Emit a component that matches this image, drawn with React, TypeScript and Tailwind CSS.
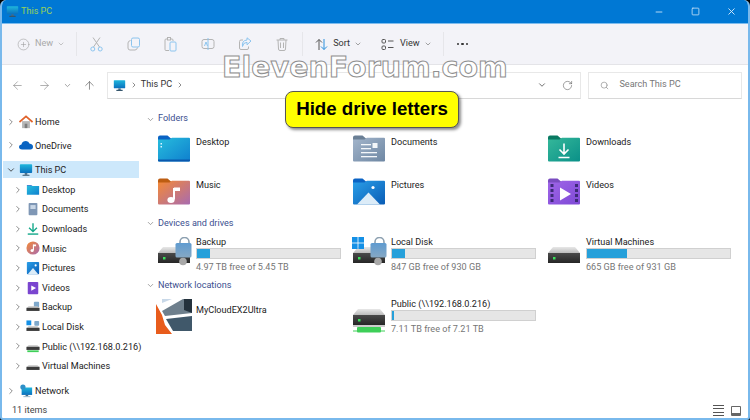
import { ArrowLeft, ArrowRight, ArrowUp, ChevronDown, ChevronRight, CirclePlus, Minus, RotateCw, Search, Square, X } from 'lucide-react';
import type { ReactNode } from 'react';

const ui = "font-['Roboto','Noto_Sans',sans-serif]";

function PcIcon({ size = 14 }: { size?: number }) {
  return (
    <svg width={size} height={size} viewBox="0 0 16 16">
      <rect x="1" y="1.500" width="14" height="10" rx="0.800" fill="url(#pc)" />
      <rect x="6.500" y="11.500" width="3" height="2" fill="#4a6d85" />
      <rect x="4" y="13.300" width="8" height="1.400" rx="0.500" fill="#35566d" />
    </svg>
  );
}

function FolderBase({ back, front, children }: { back: string; front: string; children?: ReactNode }) {
  return (
    <svg className="shrink-0" width="34" height="28" viewBox="0 0 34 28">
      <path d="M1 3.500Q1 1.500 3 1.500H10.500L14 4.500H32Q33 4.500 33 6V12H1Z" fill={back} />
      <path d="M1 5.500H12.500L15 3.800H32Q33 3.800 33 5V26.500Q33 27.500 32 27.500H2Q1 27.500 1 26.500Z" fill={front} />
      {children}
    </svg>
  );
}

function FolderIcon({ kind }: { kind: string }) {
  if (kind === 'Desktop')
    return (
      <FolderBase back="#0a63c4" front="url(#desk)">
        <rect x="3.500" y="9" width="1.500" height="1.500" fill="#d9f2ff" />
        <rect x="3.500" y="12" width="1.500" height="1.500" fill="#d9f2ff" />
        <path d="M1 25.500H33V26.500Q33 27.500 32 27.500H2Q1 27.500 1 26.500Z" fill="#0a58ad" />
      </FolderBase>
    );
  if (kind === 'Documents')
    return (
      <FolderBase back="#6a7f95" front="url(#docs)">
        <rect x="9" y="10" width="10" height="1.300" fill="#f4f7fa" />
        <rect x="9" y="14" width="10" height="1.300" fill="#f4f7fa" />
        <rect x="9" y="18" width="16" height="1.300" fill="#f4f7fa" />
        <rect x="9" y="22" width="16" height="1.300" fill="#f4f7fa" />
        <rect x="20.500" y="9" width="5" height="5" fill="#f4f7fa" />
      </FolderBase>
    );
  if (kind === 'Downloads')
    return (
      <FolderBase back="#0a7a62" front="url(#down)">
        <path d="M17 9.500V20M12.500 15.500L17 20L21.500 15.500M11.500 23.500H22.500" stroke="#fff" strokeWidth="1.600" fill="none" />
      </FolderBase>
    );
  if (kind === 'Music')
    return (
      <FolderBase back="#bd5d12" front="url(#mus)">
        <path d="M17 11V22.500" stroke="#fff" strokeWidth="2" />
        <path d="M17 10.500H23V14H17Z" fill="#fff" />
        <ellipse cx="14" cy="23" rx="3.600" ry="3" fill="#fff" />
      </FolderBase>
    );
  if (kind === 'Pictures')
    return (
      <FolderBase back="#0a63c4" front="url(#pics)">
        <circle cx="21" cy="10.500" r="1.600" fill="#fff" />
        <path d="M5 27.500L16.500 15.500L28 27.500Z" fill="#dcecf8" />
      </FolderBase>
    );
  return (
    <FolderBase back="#7a4cc0" front="url(#vid)">
      <path d="M13 10.500L24 17L13 23.500Z" fill="#fff" />
      {[8, 13, 18, 23].map((y) => (
        <g key={y}>
          <rect x="3.500" y={y - 1} width="3" height="3" fill="#3d2a78" />
          <rect x="28" y={y - 1} width="3" height="3" fill="#3d2a78" />
        </g>
      ))}
    </FolderBase>
  );
}

function DriveIcon({ lock, win, green }: { lock?: boolean; win?: boolean; green?: boolean }) {
  return (
    <svg width="38" height="36" viewBox="0 0 38 36">
      <path d="M6 10H28L33 16H1Z" fill="url(#driveTop)" />
      <rect x="1" y="16" width="32" height="10" fill="url(#driveBody)" />
      <rect x="6" y="20" width="2.500" height="2.500" fill="#39e05a" />
      {green && (
        <g>
          <rect x="1" y="26.500" width="32" height="1" fill="#9a9a9a" />
          <rect x="5" y="28" width="24" height="5.500" rx="1" fill="#3ecf58" />
          <rect x="1" y="31.500" width="32" height="1" fill="#3ecf58" />
        </g>
      )}
      {win && (
        <g fill="#1490e6">
          <rect x="0" y="0" width="5.600" height="5.600" />
          <rect x="6.400" y="0" width="5.600" height="5.600" />
          <rect x="0" y="6.400" width="5.600" height="5.600" />
          <rect x="6.400" y="6.400" width="5.600" height="5.600" />
        </g>
      )}
      {lock && (
        <g>
          <path d="M23 7V5A4.500 4.500 0 0 1 32 5V7" stroke="#8ca0b0" strokeWidth="1.600" fill="none" />
          <circle cx="26" cy="24.500" r="3.800" fill="#a8a8a8" />
          <rect x="18.500" y="6" width="16" height="14.500" rx="1.500" fill="url(#lock)" />
        </g>
      )}
    </svg>
  );
}

function CloudLogo() {
  return (
    <svg className="shrink-0" width="38" height="38" viewBox="0 0 38 38">
      <path d="M7 1H17L7 5Z" fill="#c8d8e8" />
      <path d="M1 6L7 17L10 27L17 36H1Z" fill="#e85c1c" />
      <path d="M7 13L28 1H37V15L10 18Z" fill="#6e7f8c" />
      <path d="M11 21L37 18V33H18Z" fill="#40586a" />
      <path d="M29 1H37V15L29 12Z" fill="#24323d" />
    </svg>
  );
}

function SmallIcon({ name }: { name: string }) {
  switch (name) {
    case 'Home':
      return (
        <svg width="14" height="14" viewBox="0 0 16 16">
          <rect x="3.500" y="7" width="9" height="8" fill="#b7b7b7" />
          <rect x="6.500" y="10" width="3" height="5" fill="#7d7d7d" />
          <path d="M0.500 8L8 1.500L15.500 8" stroke="#e0622a" strokeWidth="2" fill="none" />
        </svg>
      );
    case 'OneDrive':
      return (
        <svg width="14" height="14" viewBox="0 0 16 16">
          <path d="M3.500 13Q0 13 0 10Q0 7.500 2.800 7.300Q4 3.500 8 3.500Q11 3.500 12.200 6.500Q16 6.800 16 10Q16 13 13 13Z" fill="#0a64c2" />
        </svg>
      );
    case 'This PC':
      return <PcIcon />;
    case 'Desktop':
      return (
        <svg width="14" height="14" viewBox="0 0 16 16">
          <path d="M1 3.500H15V13.500H1Z" fill="url(#desk)" />
          <path d="M1 2.500H6L7.500 3.500H1Z" fill="#0a63c4" />
        </svg>
      );
    case 'Documents':
      return (
        <svg width="14" height="14" viewBox="0 0 16 16">
          <rect x="3" y="1" width="10" height="14" rx="1" fill="#7f97b5" />
          <rect x="5" y="3.500" width="6" height="4.500" fill="#c8d6e6" />
        </svg>
      );
    case 'Downloads':
      return (
        <svg width="14" height="14" viewBox="0 0 16 16">
          <path d="M8 1.500V10.500M3.500 6.500L8 11L12.500 6.500" stroke="#14a88a" strokeWidth="1.600" fill="none" />
          <rect x="2" y="13" width="12" height="1.600" fill="#14a88a" />
        </svg>
      );
    case 'Music':
      return (
        <svg width="14" height="14" viewBox="0 0 16 16">
          <circle cx="8" cy="8" r="7.500" fill="url(#mus)" />
          <path d="M8.500 4V10.500" stroke="#fff" strokeWidth="1.300" />
          <path d="M8.500 4H11.500V6H8.500Z" fill="#fff" />
          <circle cx="7" cy="10.800" r="1.800" fill="#fff" />
        </svg>
      );
    case 'Pictures':
      return (
        <svg width="14" height="14" viewBox="0 0 16 16">
          <rect x="1" y="1" width="14" height="14" rx="1" fill="url(#pics)" />
          <path d="M2 15L8 8L14 15Z" fill="#dcecf8" />
          <circle cx="11" cy="5" r="1.200" fill="#fff" />
        </svg>
      );
    case 'Videos':
      return (
        <svg width="14" height="14" viewBox="0 0 16 16">
          <rect x="2" y="1" width="12" height="14" rx="1" fill="#7a45cf" />
          <path d="M6 5L11.500 8L6 11Z" fill="#fff" />
        </svg>
      );
    case 'Backup':
    case 'Local Disk':
    case 'Virtual Machines':
    case 'Public (\\\\192.168.0.216)':
      return (
        <svg width="14" height="14" viewBox="0 0 16 16">
          {name === 'Backup' && <rect x="9" y="2" width="6" height="6" rx="1" fill="#7fa9cc" />}
          {name === 'Local Disk' && (
            <g>
              <rect x="0.500" y="0.500" width="5.500" height="5.500" fill="#1490e6" />
              <rect x="9.500" y="1" width="5.500" height="5.500" rx="1" fill="#7fa9cc" />
            </g>
          )}
          <path d="M3 7H13L15.500 9H0.500Z" fill="#c4c4c4" />
          <rect x="0.500" y="9" width="15" height="3.500" fill="#3c3c3c" />
          {name.startsWith('Public') && <rect x="1.500" y="13" width="13" height="2" fill="#3ecf58" />}
        </svg>
      );
    default:
      return (
        <svg width="16" height="16" viewBox="0 0 16 16">
          <rect x="3" y="4" width="12" height="8.500" fill="url(#pc)" />
          <circle cx="4.500" cy="3.500" r="3" fill="#2e90c8" />
          <rect x="7.500" y="12.500" width="3" height="1.500" fill="#4a6d85" />
          <rect x="5" y="14" width="8" height="1" fill="#8fb0c5" />
        </svg>
      );
  }
}

function SideRow({ name, indent, open, active }: { name: string; indent?: boolean; open?: boolean; active?: boolean }) {
  return (
    <div className={`flex items-center ${indent ? 'pl-[10px]' : 'pl-[3px]'} ${active ? 'my-[1.300px] h-[17px] bg-[#cde8fb]' : 'h-[19.6px]'}`}>
      {open ? <ChevronDown size={10} className="shrink-0 text-[#333]" /> : <ChevronRight size={10} className="shrink-0 text-[#777]" />}
      <span className="ml-[3px] flex w-[14px] shrink-0 justify-center">
        <SmallIcon name={name} />
      </span>
      <span className="ml-[2px] whitespace-nowrap pt-[2px] text-[9.100px] text-[#222]">{name}</span>
    </div>
  );
}

function GroupHead({ label, className }: { label: string; className: string }) {
  return (
    <div className={`flex items-center gap-[3px] pt-[1px] text-[9.100px] text-[#3b4f8f] ${className}`}>
      <ChevronDown size={9} className="text-[#888]" />
      {label}
    </div>
  );
}

function FolderTile({ name }: { name: string }) {
  return (
    <div className="flex h-[43.3px] w-[195px] gap-[5px]">
      <FolderIcon kind={name} />
      <span className="pt-[2px] text-[9.100px] leading-[13px] text-[#222]">{name}</span>
    </div>
  );
}

function DriveTile({ name, used, free, icon }: { name: string; used: number; free: string; icon: ReactNode }) {
  return (
    <div className="flex w-[193px]">
      <span className="mr-[1px] w-[38px] shrink-0 pt-[2.500px]">{icon}</span>
      <div className="w-[146px]">
        <div className="h-[13px] whitespace-nowrap pt-[1px] text-[9.100px] leading-[13px] text-[#222]">{name}</div>
        <div className="mt-[0.500px] h-[11px] w-[145px] border border-[#d0d0d0] bg-[#e6e6e6]">
          <div className="h-full bg-[#26a0da]" style={{ width: `${used}%` }} />
        </div>
        <div className="mt-[1.500px] whitespace-nowrap text-[9.100px] leading-[13px] text-[#767676]">{free}</div>
      </div>
    </div>
  );
}

function ToolBtn({ children }: { children: ReactNode }) {
  return <span className="flex w-[37px] justify-center">{children}</span>;
}

const gray = '#b4b4b4';
const blue = '#8cc4ee';

export default function App() {
  const folders = ['Desktop', 'Documents', 'Downloads', 'Music', 'Pictures', 'Videos'];
  const nav = ['Desktop', 'Documents', 'Downloads', 'Music', 'Pictures', 'Videos', 'Backup', 'Local Disk', 'Public (\\\\192.168.0.216)', 'Virtual Machines'];

  return (
    <div className={`relative h-[420px] w-[750px] overflow-hidden bg-black ${ui}`}>
      <svg className="absolute h-0 w-0">
        <defs>
          <linearGradient id="pc" x1="0" y1="0" x2="0" y2="1">
            <stop offset="0" stopColor="#1fb6dc" />
            <stop offset="1" stopColor="#0a6fbd" />
          </linearGradient>
          <linearGradient id="desk" x1="0" y1="0" x2="1" y2="1">
            <stop offset="0" stopColor="#27bddd" />
            <stop offset="1" stopColor="#0f7fce" />
          </linearGradient>
          <linearGradient id="docs" x1="0" y1="0" x2="1" y2="1">
            <stop offset="0" stopColor="#a3b5cb" />
            <stop offset="1" stopColor="#6e87a3" />
          </linearGradient>
          <linearGradient id="down" x1="0" y1="0" x2="1" y2="1">
            <stop offset="0" stopColor="#35b89a" />
            <stop offset="1" stopColor="#0a9088" />
          </linearGradient>
          <linearGradient id="mus" x1="0" y1="0" x2="1" y2="1">
            <stop offset="0" stopColor="#f58a35" />
            <stop offset="1" stopColor="#a86bb0" />
          </linearGradient>
          <linearGradient id="pics" x1="0" y1="0" x2="1" y2="1">
            <stop offset="0" stopColor="#2a9fe8" />
            <stop offset="1" stopColor="#0a5cb5" />
          </linearGradient>
          <linearGradient id="vid" x1="0" y1="0" x2="1" y2="1">
            <stop offset="0" stopColor="#a066e8" />
            <stop offset="1" stopColor="#7e49d6" />
          </linearGradient>
          <linearGradient id="driveTop" x1="0" y1="0" x2="0" y2="1">
            <stop offset="0" stopColor="#e8e8e8" />
            <stop offset="1" stopColor="#bcbcbc" />
          </linearGradient>
          <linearGradient id="driveBody" x1="0" y1="0" x2="0" y2="1">
            <stop offset="0" stopColor="#4a4a4a" />
            <stop offset="1" stopColor="#262626" />
          </linearGradient>
          <linearGradient id="lock" x1="0" y1="0" x2="0" y2="1">
            <stop offset="0" stopColor="#5f9bd0" />
            <stop offset="1" stopColor="#86a8c4" />
          </linearGradient>
        </defs>
      </svg>

      <div className="flex h-full flex-col overflow-hidden rounded-t-[6px] rounded-b-[3px] border-x-2 border-b-2 border-[#79b9ec] bg-white">
        {/* title bar */}
        <div className="-mx-[2px] flex h-[24px] shrink-0 items-center border-b border-[#7dbcee] bg-[#0078d4] pl-[6px] pr-[1px]">
          <PcIcon size={13} />
          <span className="ml-[2px] text-[9.100px] text-[#9ad25a]">This PC</span>
          <div className="ml-auto flex items-center text-[#d6eafa]">
            <span className="flex w-[36px] justify-center"><Minus size={10} /></span>
            <span className="flex w-[36px] justify-center"><Square size={9} /></span>
            <span className="flex w-[36px] justify-center"><X size={11} /></span>
          </div>
        </div>

        {/* command bar */}
        <div className="flex h-[41px] shrink-0 items-center border-b border-[#e4e4e8] bg-[#f3f3f8] pl-[15px] text-[9.100px]">
          <CirclePlus size={13} strokeWidth={1} className="text-[#999]" />
          <span className="ml-[5px] text-[#aaa]">New</span>
          <ChevronDown size={8} className="ml-[4px] text-[#aaa]" />
          <span className="ml-[11px] mr-[1px] h-[24px] w-px bg-[#e6e6ea]" />
          <ToolBtn>
            <svg width="13" height="15" viewBox="0 0 13 15" fill="none">
              <path d="M3 0.500L9.500 10M10 0.500L3.500 10" stroke={gray} />
              <circle cx="2.800" cy="12" r="2" stroke={blue} />
              <circle cx="10.200" cy="12" r="2" stroke={blue} />
            </svg>
          </ToolBtn>
          <ToolBtn>
            <svg width="14" height="14" viewBox="0 0 14 14" fill="none">
              <path d="M3.500 3.500Q1 4 1 6V11Q1 13 3 13H8Q10 13 10.500 10.500" stroke={gray} />
              <rect x="4.500" y="1" width="8" height="9" rx="1.500" stroke={blue} />
            </svg>
          </ToolBtn>
          <ToolBtn>
            <svg width="13" height="15" viewBox="0 0 13 15" fill="none">
              <path d="M5 13.500H2Q1 13.500 1 12.500V3Q1 2 2 2H8Q9 2 9 3V4" stroke={gray} />
              <rect x="3.500" y="0.500" width="3" height="2.500" fill="#f3f3f8" stroke={gray} />
              <rect x="6" y="5" width="6" height="9" rx="1" stroke={blue} />
            </svg>
          </ToolBtn>
          <ToolBtn>
            <svg width="14" height="14" viewBox="0 0 14 14" fill="none">
              <rect x="1" y="2.500" width="12" height="9" rx="2" stroke={gray} />
              <path d="M7 1V13M3.500 9L5 5L6.500 9" stroke={blue} />
            </svg>
          </ToolBtn>
          <ToolBtn>
            <svg width="14" height="14" viewBox="0 0 14 14" fill="none">
              <path d="M5 3H3Q1.500 3 1.500 4.500V11Q1.500 12.500 3 12.500H9Q10.500 12.500 10.500 11V9.500" stroke={gray} />
              <path d="M4.500 9.500Q5 5.500 9 5.300V7.800L13 4L9 0.800V3Q3.500 3.500 4.500 9.500Z" stroke={blue} />
            </svg>
          </ToolBtn>
          <ToolBtn>
            <svg width="12" height="14" viewBox="0 0 12 14" fill="none" stroke={gray}>
              <path d="M0.500 3H11.500M4 3V1.500H8V3M2 3L2.500 12Q2.500 13.500 4 13.500H8Q9.500 13.500 9.500 12L10 3M4.500 5.500V11M7.500 5.500V11" />
            </svg>
          </ToolBtn>
          <span className="mx-[2px] h-[24px] w-px bg-[#e6e6ea]" />
          <svg className="ml-[10px]" width="13" height="13" viewBox="0 0 13 13" fill="none">
            <path d="M4 12V1.500M1 4.500L4 1.500L7 4.500" stroke="#555" />
            <path d="M9 1V11.500M6 8.500L9 11.500L12 8.500" stroke="#2b8fdc" />
          </svg>
          <span className="ml-[5px] text-[#333]">Sort</span>
          <ChevronDown size={8} className="ml-[4px] text-[#777]" />
          <svg className="ml-[19px]" width="13" height="13" viewBox="0 0 13 13" fill="none" stroke="#555">
            <rect x="1" y="1.500" width="3.500" height="3.500" rx="1" />
            <rect x="1" y="8" width="3.500" height="3.500" rx="1" />
            <path d="M7 3H12.500M7 9.500H12.500" />
          </svg>
          <span className="ml-[6px] text-[#333]">View</span>
          <ChevronDown size={8} className="ml-[4px] text-[#777]" />
          <span className="ml-[11px] h-[24px] w-px bg-[#e6e6ea]" />
          <span className="ml-[13px] flex gap-[2px]">
            <i className="size-[2.500px] rounded-full bg-[#333]" />
            <i className="size-[2.500px] rounded-full bg-[#333]" />
            <i className="size-[2.500px] rounded-full bg-[#333]" />
          </span>
        </div>

        {/* address row */}
        <div className="flex h-[40px] shrink-0 items-center pl-[9px] pr-[6px] text-[#888]">
          <ArrowLeft size={13} strokeWidth={1.200} />
          <ArrowRight size={13} strokeWidth={1.200} className="ml-[14px]" />
          <ChevronDown size={9} className="ml-[12px]" />
          <ArrowUp size={13} strokeWidth={1.200} className="ml-[11px] text-[#555]" />
          <div className="ml-[11px] flex h-[27px] w-[476px] items-center border border-[#e8e8e8] border-b-[#d8d8d8] pl-[5px] pr-[7px]">
            <PcIcon size={13} />
            <ChevronRight size={8} className="ml-[4px] text-[#555]" />
            <span className="ml-[3px] text-[9.100px] text-[#333]">This PC</span>
            <ChevronRight size={8} className="ml-[4px] text-[#555]" />
            <ChevronDown size={10} className="ml-auto text-[#555]" />
            <RotateCw size={11} strokeWidth={1.200} className="ml-[15px] text-[#555]" />
          </div>
          <div className="ml-[7px] flex h-[27px] w-[154px] items-center border border-[#e8e8e8] border-b-[#d8d8d8] pl-[11px]">
            <Search size={9} className="text-[#999]" />
            <span className="ml-[10px] text-[9.100px] text-[#777]">Search This PC</span>
          </div>
        </div>

        <div className="flex min-h-0 flex-1">
          {/* nav pane */}
          <div className="ml-[1px] w-[136px] shrink-0 pt-[7px]">
            <SideRow name="Home" />
            <div className="h-[4px]" />
            <SideRow name="OneDrive" />
            <div className="h-[5px]" />
            <SideRow name="This PC" open active />
            {nav.map((n) => (
              <SideRow key={n} name={n} indent />
            ))}
            <div className="h-[5.500px]" />
            <SideRow name="Network" />
          </div>

          {/* content */}
          <div className="pl-[7px] pt-[7px]">
            <GroupHead label="Folders" className="h-[13px]" />
            <div className="mt-[8.500px] grid grid-cols-[195px_195px_195px] pl-[11px]">
              {folders.map((f) => (
                <FolderTile key={f} name={f} />
              ))}
            </div>
            <GroupHead label="Devices and drives" className="-mt-[3.600px] h-[13px]" />
            <div className="mt-[5px] grid grid-cols-[195px_195px_195px] pl-[11px]">
              <DriveTile name="Backup" used={9} free="4.97 TB free of 5.45 TB" icon={<DriveIcon lock />} />
              <DriveTile name="Local Disk" used={9} free="847 GB free of 930 GB" icon={<DriveIcon lock win />} />
              <DriveTile name="Virtual Machines" used={28} free="665 GB free of 931 GB" icon={<DriveIcon />} />
            </div>
            <GroupHead label="Network locations" className="mt-[5px] h-[13px]" />
            <div className="mt-[5px] grid grid-cols-[195px_195px_195px] pl-[9px]">
              <div className="flex gap-[3px] pt-[1.500px]">
                <CloudLogo />
                <span className="pt-[5.500px] text-[9.100px] leading-[13px] text-[#222]">MyCloudEX2Ultra</span>
              </div>
              <div className="pl-[2px]">
                <DriveTile name="Public (\\192.168.0.216)" used={1.500} free="7.11 TB free of 7.21 TB" icon={<DriveIcon green />} />
              </div>
            </div>
          </div>
        </div>

        {/* status bar */}
        <div className="flex h-[19px] shrink-0 items-center pl-[10px] pr-[7px] pt-[4px] text-[9.100px] text-[#444]">
          11 items
          <span className="ml-auto flex items-center gap-[7px]">
            <span className="flex h-[11px] w-[11px] flex-col justify-between">
              <i className="h-px bg-[#555]" />
              <i className="h-px bg-[#555]" />
              <i className="h-px bg-[#555]" />
              <i className="h-px bg-[#555]" />
            </span>
            <span className="h-[10px] w-[10px] rounded-[1px] border border-b-[3px] border-[#666]" />
          </span>
        </div>
      </div>

      {/* watermark */}
      <div className="absolute left-[222px] top-[48px] whitespace-nowrap font-['DejaVu_Sans',sans-serif] text-[28.500px] font-bold leading-[40px] text-white/85 [-webkit-text-stroke:1px_#8f8f8f]">
        ElevenForum.com
      </div>

      {/* callout */}
      <div className="absolute left-[285px] top-[91px] flex h-[37px] w-[174px] items-center justify-center rounded-[8px] border border-[#555] bg-[#ffff00] font-['Liberation_Sans',sans-serif] text-[18.700px] font-bold text-black shadow-[2px_2px_3px_rgba(0,0,0,0.45)]">
        Hide drive letters
      </div>
    </div>
  );
}
